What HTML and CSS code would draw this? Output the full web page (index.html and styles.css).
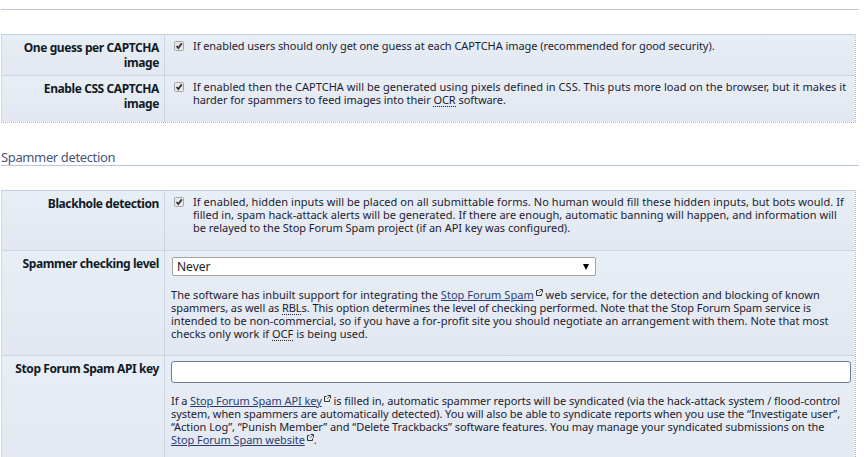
FILE: index.html
```html
<!DOCTYPE html>
<html lang="en">
<head>
<meta charset="utf-8">
<title>Spammer detection</title>
<link rel="stylesheet" href="styles.css">
</head>
<body>
<svg class="defs" width="0" height="0"><defs>
<symbol id="ext" viewBox="0 0 7 8"><path d="M2.5 2.5H.5V7.5H5.5V5.5" fill="none" stroke="#333"/><path d="M3 5 6 2" fill="none" stroke="#777"/><path d="M3.5 1.5H6.5V4.5" fill="none" stroke="#333"/></symbol>
<symbol id="check" viewBox="0 0 10 10"><rect x=".5" y=".5" width="9" height="9" rx="1" fill="#e9e9e9" stroke="#a5a5a5"/><path d="M2.5 5 4.3 7 7.8 2.4" fill="none" stroke="#333" stroke-width="1.8"/></symbol>
</defs></svg>
<div class="rule"></div>
<div class="table captcha">
  <div class="row r1">
    <div class="label">One guess per CAPTCHA<br>image</div>
    <div class="cell option"><svg class="check"><use href="#check"/></svg><p><span class="tighter">If enabled users should only get one guess at each CAPTCHA image (recommended for good security).</span></p></div>
  </div>
  <div class="row r2">
    <div class="label">Enable CSS CAPTCHA<br>image</div>
    <div class="cell option"><svg class="check"><use href="#check"/></svg><p><span class="loose">If enabled then the CAPTCHA will be generated using pixels defined in CSS. This puts more load on the browser, but it makes it</span><br><span class="tighter">harder for spammers to feed images into their <abbr>OCR</abbr> software.</span></p></div>
  </div>
</div>
<h2>Spammer detection</h2>
<div class="table spam">
  <div class="row r3">
    <div class="label">Blackhole detection</div>
    <div class="cell option"><svg class="check"><use href="#check"/></svg><p><span class="looser">If enabled, hidden inputs will be placed on all submittable forms. No human would fill these hidden inputs, but bots would. If</span><br><span class="loose">filled in, spam hack-attack alerts will be generated. If there are enough, automatic banning will happen, and information will</span><br><span class="tight">be relayed to the Stop Forum Spam project (if an API key was configured).</span></p></div>
  </div>
  <div class="row r4">
    <div class="label">Spammer checking level</div>
    <div class="cell"><div class="select"><span>Never</span><svg width="6" height="6"><path d="M0 0H6L3 6Z"/></svg></div>
    <p><span class="loose">The software has inbuilt support for integrating the <a>Stop Forum Spam</a><svg class="ext"><use href="#ext"/></svg> web service, for the detection and blocking of known</span><br><span class="tightest">spammers, as well as <abbr>RBL</abbr>s. This option determines the level of checking performed. Note that the Stop Forum Spam service is</span><br><span>intended to be non-commercial, so if you have a for-profit site you should negotiate an arrangement with them. Note that most</span><br><span class="loose">checks only work if <abbr>OCF</abbr> is being used.</span></p></div>
  </div>
  <div class="row r5">
    <div class="label">Stop Forum Spam API key</div>
    <div class="cell"><input class="key" type="text">
    <p><span class="tighter">If a <a>Stop Forum Spam API key</a><svg class="ext"><use href="#ext"/></svg> is filled in, automatic spammer reports will be syndicated (via the hack-attack system / flood-control</span><br><span class="tightest">system, when spammers are automatically detected). You will also be able to syndicate reports when you use the “Investigate user”,</span><br><span class="tighter">“Action Log”, “Punish Member” and “Delete Trackbacks” software features. You may manage your syndicated submissions on the</span><br><span class="tighter"><a>Stop Forum Spam website</a><svg class="ext"><use href="#ext"/></svg>.</span></p></div>
  </div>
</div>
</body>
</html>
```
FILE: styles.css
```css
* { box-sizing: border-box; }
body { margin: 0; height: 457px; overflow: hidden; background: #fff; color: #1c1c30; font: 11px/13px "Noto Sans", sans-serif; }
.defs { position: absolute; }
.rule { height: 10px; width: 858px; margin-left: 1px; border-bottom: 1px solid #c3c6d4; }
.table { width: 855px; margin-left: 1px; border: 1px dotted #a9b8d0; border-left: 1px solid #cdd7e5; border-top: 1px solid #c3cfdf; }
.captcha { margin-top: 24px; height: 89px; }
.row { display: grid; grid-template-columns: 162px 1fr; border-bottom: 1px solid #cdd5e2; background: linear-gradient(#e8eef5, #e2e7f1); }
.row:last-child { border-bottom: 0; }
.r1 { height: 41px; }
.r2 { height: 46px; }
.r3 { height: 60px; }
.r4 { height: 105px; }
.r5 { height: 120px; }
.label { padding: 5px 5px 0 0; text-align: right; color: #111b25; font-weight: bold; font-size: 12px; line-height: 15px; letter-spacing: -.41px; white-space: nowrap; }
.cell { border-left: 1px solid #cdd5e2; padding: 5px 4px 0 6px; white-space: nowrap; }
.option { display: flex; padding: 4px 4px 0 9px; }
.check { width: 10px; height: 10px; margin: 2px 9px 0 0; }
p { margin: 0; }
.looser { letter-spacing: .055px; }
.loose { letter-spacing: .03px; }
.tight { letter-spacing: -.025px; }
.tighter { letter-spacing: -.06px; }
.tightest { letter-spacing: -.075px; }
abbr { background: linear-gradient(90deg, #222 50%, transparent 50%) 0 100% / 2px 1px repeat-x; }
a { color: #2b3d78; text-decoration: underline; }
h2 { width: 858px; height: 43px; margin: 0 0 24px 1px; padding-top: 26px; border-bottom: 1px solid #b9c6d8; color: #45557a; font-size: 13px; line-height: 16px; font-weight: normal; letter-spacing: -.37px; }
.select { display: flex; align-items: center; justify-content: space-between; width: 424px; height: 19px; margin: 1px 0 12px 1px; padding: 0 6px 0 4px; border: 1px solid #a3a3a3; border-radius: 2px; background: #fff; color: #222; font-size: 12px; }
.key { display: block; width: 680px; height: 22px; margin-bottom: 11px; border: 1px solid #6c7b98; border-radius: 3px; background: #fff; }
.ext { width: 7px; height: 8px; margin: 0 0 0 2px; vertical-align: 3px; }
```
